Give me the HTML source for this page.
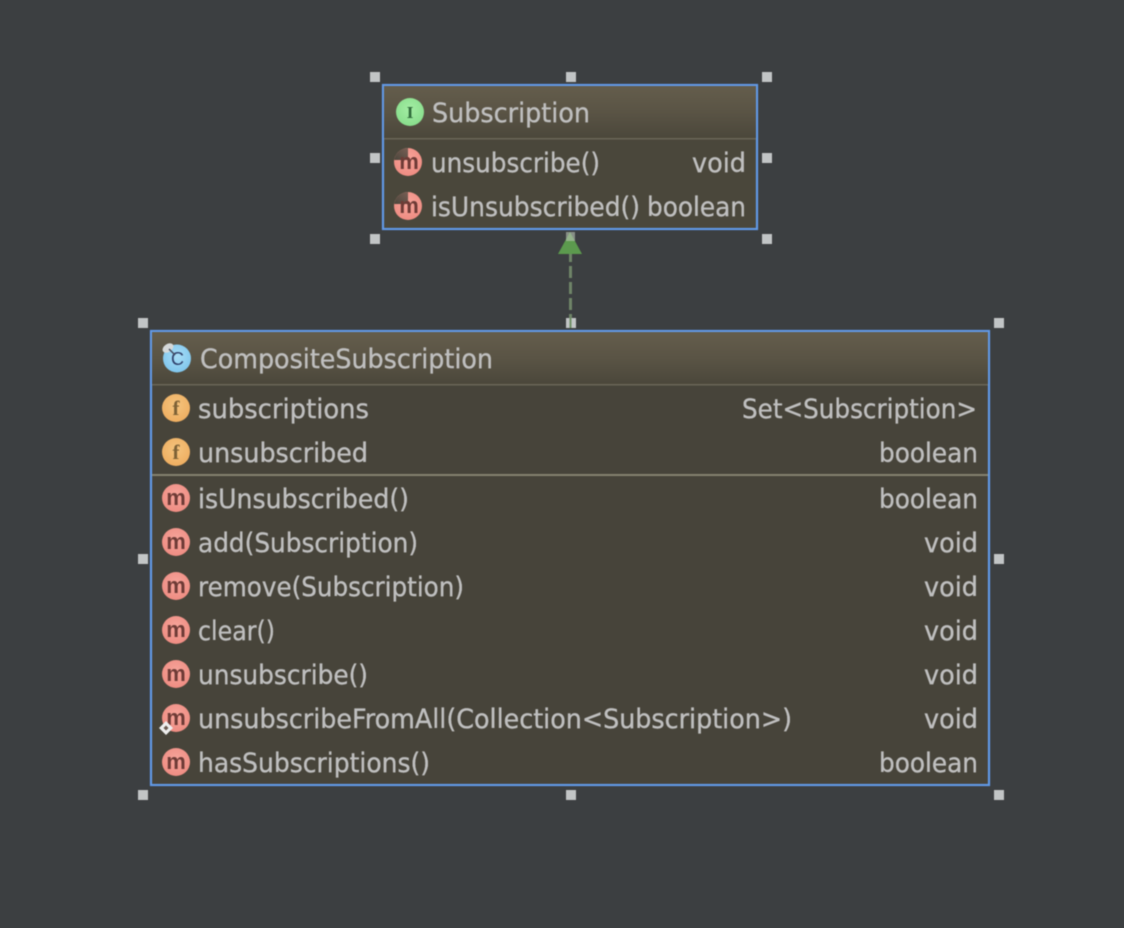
<!DOCTYPE html>
<html>
<head>
<meta charset="utf-8">
<style>
html,body{margin:0;padding:0;background:#3c3f41;width:1124px;height:928px;overflow:hidden}
svg{display:block;filter:blur(0.4px)}
text{font-family:"DejaVu Sans","Liberation Sans",sans-serif;font-size:26.500px;fill:#bfbfbf;stroke:#bfbfbf;stroke-width:0.350px}
.m{font-family:"Liberation Sans",sans-serif;font-size:22px;font-weight:bold;fill:#6e3b36;stroke:none;text-anchor:middle}
.f{font-family:"Liberation Serif",serif;font-size:21px;font-weight:bold;fill:#7d6136;stroke:none;text-anchor:middle}
</style>
</head>
<body>
<svg width="1124" height="928" viewBox="0 0 1124 928" xmlns="http://www.w3.org/2000/svg">
<defs>
<linearGradient id="h" x1="0" y1="0" x2="0" y2="1"><stop offset="0" stop-color="#645d4c"/><stop offset="0.5" stop-color="#5a5445"/><stop offset="1" stop-color="#4b473b"/></linearGradient>
<linearGradient id="w" x1="1" y1="0" x2="0" y2="1"><stop offset="0" stop-color="#7a5f55"/><stop offset="1" stop-color="#4a453b"/></linearGradient>
<radialGradient id="rm" cx="0.5" cy="0.4" r="0.65"><stop offset="0" stop-color="#f6a59b"/><stop offset="1" stop-color="#ee8a80"/></radialGradient>
<radialGradient id="rf" cx="0.5" cy="0.4" r="0.65"><stop offset="0" stop-color="#f4c47e"/><stop offset="1" stop-color="#eeac5e"/></radialGradient>
<radialGradient id="ri" cx="0.5" cy="0.4" r="0.65"><stop offset="0" stop-color="#a4eea4"/><stop offset="1" stop-color="#86dc8a"/></radialGradient>
<radialGradient id="rc" cx="0.5" cy="0.4" r="0.65"><stop offset="0" stop-color="#a8ddf6"/><stop offset="1" stop-color="#7cc4ec"/></radialGradient>
</defs>

<!-- connector -->
<line x1="570.500" y1="250" x2="570.500" y2="330" stroke="#6f8468" stroke-width="3" stroke-dasharray="12 4"/>
<polygon points="570,232 582,254 558,254" fill="#5c9a4e"/>
<rect x="566" y="232" width="9" height="9" fill="#b9c4b4" opacity="0.6"/>

<!-- Subscription box -->
<rect x="383" y="85" width="374" height="144" fill="#4a473b" stroke="#6199e6" stroke-width="2.200"/>
<rect x="384" y="86" width="372" height="52" fill="url(#h)"/>
<rect x="384" y="138" width="372" height="1.500" fill="#6a6657"/>

<!-- Composite box -->
<rect x="151" y="331" width="838" height="454" fill="#47443a" stroke="#6199e6" stroke-width="2.200"/>
<rect x="152" y="332" width="836" height="52" fill="url(#h)"/>
<rect x="152" y="384" width="836" height="1.500" fill="#6a6657"/>
<rect x="152" y="474" width="836" height="2" fill="#84826f"/>

<!-- handles -->
<g fill="#c2c5c6">
<rect x="370" y="72" width="10" height="10"/><rect x="566" y="72" width="10" height="10"/><rect x="762" y="72" width="10" height="10"/>
<rect x="370" y="153" width="10" height="10"/><rect x="762" y="153" width="10" height="10"/>
<rect x="370" y="234" width="10" height="10"/><rect x="762" y="234" width="10" height="10"/>
<rect x="138" y="318" width="10" height="10"/><rect x="566" y="318" width="10" height="10"/><rect x="994" y="318" width="10" height="10"/>
<rect x="138" y="554" width="10" height="10"/><rect x="994" y="554" width="10" height="10"/>
<rect x="138" y="790" width="10" height="10"/><rect x="566" y="790" width="10" height="10"/><rect x="994" y="790" width="10" height="10"/>
</g>
<line x1="570.500" y1="318" x2="570.500" y2="328" stroke="#6f8f66" stroke-width="2"/>

<!-- Subscription icons -->
<circle cx="410" cy="112" r="14" fill="url(#ri)"/>
<text x="410" y="118" style="font-family:'Liberation Serif',serif;font-size:17px;font-weight:bold;fill:#2f6a3a;stroke:none;text-anchor:middle">I</text>
<circle cx="408" cy="162" r="14" fill="url(#rm)"/>
<path d="M408 160V148A14 14 0 0 0 394.200 160Z" fill="url(#w)"/>
<text class="m" x="409" y="169">m</text>
<circle cx="408" cy="206" r="14" fill="url(#rm)"/>
<path d="M408 204V192A14 14 0 0 0 394.200 204Z" fill="url(#w)"/>
<text class="m" x="409" y="213">m</text>

<!-- Subscription text -->
<text x="432" y="122" textLength="158" lengthAdjust="spacingAndGlyphs">Subscription</text>
<text x="431" y="172" textLength="169" lengthAdjust="spacingAndGlyphs">unsubscribe()</text>
<text x="692" y="172" textLength="54" lengthAdjust="spacingAndGlyphs">void</text>
<text x="431" y="216" textLength="209" lengthAdjust="spacingAndGlyphs">isUnsubscribed()</text>
<text x="647" y="216" textLength="99" lengthAdjust="spacingAndGlyphs">boolean</text>

<!-- Composite header -->
<circle cx="177" cy="358.500" r="14" fill="url(#rc)"/>
<text x="177.500" y="365" style="font-family:'Liberation Sans',sans-serif;font-size:18px;fill:#2f3f6a;stroke:none;text-anchor:middle">C</text>
<ellipse cx="168" cy="348" rx="6" ry="4" fill="#d5d8d8" transform="rotate(-35 168 348)"/>
<line x1="169" y1="349" x2="175" y2="355" stroke="#444c60" stroke-width="1.500"/>
<text x="200" y="368" textLength="293" lengthAdjust="spacingAndGlyphs">CompositeSubscription</text>

<!-- Field icons -->
<circle cx="176" cy="408" r="14" fill="url(#rf)"/><text class="f" x="176" y="415">f</text>
<circle cx="176" cy="452" r="14" fill="url(#rf)"/><text class="f" x="176" y="459">f</text>

<!-- Method icons -->
<circle cx="176" cy="498" r="14" fill="url(#rm)"/><text class="m" x="176" y="505">m</text>
<circle cx="176" cy="542" r="14" fill="url(#rm)"/><text class="m" x="176" y="549">m</text>
<circle cx="176" cy="586" r="14" fill="url(#rm)"/><text class="m" x="176" y="593">m</text>
<circle cx="176" cy="630" r="14" fill="url(#rm)"/><text class="m" x="176" y="637">m</text>
<circle cx="176" cy="674" r="14" fill="url(#rm)"/><text class="m" x="176" y="681">m</text>
<circle cx="176" cy="718" r="14" fill="url(#rm)"/><text class="m" x="176" y="725">m</text>
<polygon points="166,721 173,728 166,735 159,728" fill="#eeeeee"/>
<polygon points="166,725.500 168.500,728 166,730.500 163.500,728" fill="#6a5a50"/>
<circle cx="176" cy="762" r="14" fill="url(#rm)"/><text class="m" x="176" y="769">m</text>

<!-- Composite rows -->
<text x="198" y="418" textLength="171" lengthAdjust="spacingAndGlyphs">subscriptions</text>
<text x="742" y="418" textLength="235" lengthAdjust="spacingAndGlyphs">Set&lt;Subscription&gt;</text>
<text x="198" y="462" textLength="170" lengthAdjust="spacingAndGlyphs">unsubscribed</text>
<text x="879" y="462" textLength="99" lengthAdjust="spacingAndGlyphs">boolean</text>
<text x="198" y="508" textLength="211" lengthAdjust="spacingAndGlyphs">isUnsubscribed()</text>
<text x="879" y="508" textLength="99" lengthAdjust="spacingAndGlyphs">boolean</text>
<text x="198" y="552" textLength="220" lengthAdjust="spacingAndGlyphs">add(Subscription)</text>
<text x="924" y="552" textLength="54" lengthAdjust="spacingAndGlyphs">void</text>
<text x="198" y="596" textLength="266" lengthAdjust="spacingAndGlyphs">remove(Subscription)</text>
<text x="924" y="596" textLength="54" lengthAdjust="spacingAndGlyphs">void</text>
<text x="198" y="640" textLength="77" lengthAdjust="spacingAndGlyphs">clear()</text>
<text x="924" y="640" textLength="54" lengthAdjust="spacingAndGlyphs">void</text>
<text x="198" y="684" textLength="170" lengthAdjust="spacingAndGlyphs">unsubscribe()</text>
<text x="924" y="684" textLength="54" lengthAdjust="spacingAndGlyphs">void</text>
<text x="198" y="728" textLength="594" lengthAdjust="spacingAndGlyphs">unsubscribeFromAll(Collection&lt;Subscription&gt;)</text>
<text x="924" y="728" textLength="54" lengthAdjust="spacingAndGlyphs">void</text>
<text x="198" y="772" textLength="232" lengthAdjust="spacingAndGlyphs">hasSubscriptions()</text>
<text x="879" y="772" textLength="99" lengthAdjust="spacingAndGlyphs">boolean</text>
</svg>
</body>
</html>
